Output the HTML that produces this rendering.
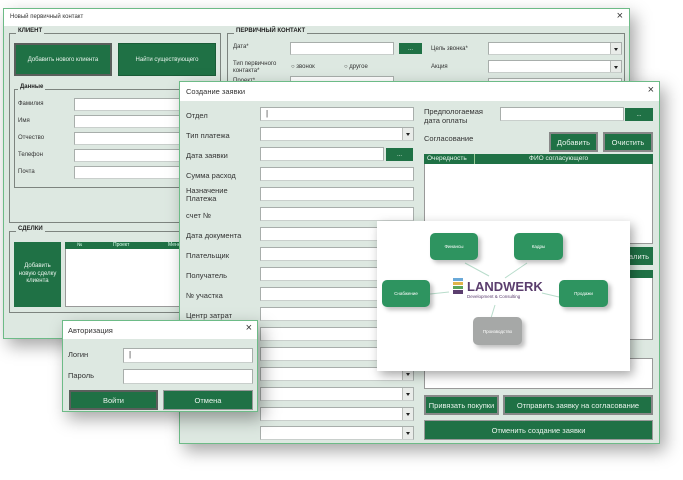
<!DOCTYPE html>
<html><head><meta charset="utf-8"><style>
*{box-sizing:border-box;margin:0;padding:0}
body{width:683px;height:480px;background:#fff;position:relative;overflow:hidden;font-family:"Liberation Sans","DejaVu Sans",sans-serif;color:#333}
.a{position:absolute}
.win{position:absolute;background:#dde8e1;border:1px solid #6dbb87;box-shadow:5px 7px 16px rgba(0,0,0,.35)}
.tb{position:absolute;left:0;top:0;right:0;background:#fff}
.in{position:absolute;background:#fff;border:1px solid #a8aeab;border-bottom-color:#c9cfcc}
.sel:after{content:"";position:absolute;right:0;top:0;bottom:0;width:10px;background:#e9ece9;border-left:1px solid #b9bdb9}
.sel:before{content:"";position:absolute;right:3px;top:50%;margin-top:-1px;border:2px solid transparent;border-top:3px solid #222;z-index:2}
.btn{position:absolute;background:#1f7145;color:#e8f3ec;text-align:center;display:flex;align-items:center;justify-content:center}
.dk{border:2px solid #5a5f5c}
.grp{position:absolute;border:1px solid #7d847f}
.gl{position:absolute;top:-6px;left:6px;background:#dde8e1;padding:0 2px;font-weight:bold;font-size:6px;color:#222}
.lb{position:absolute;font-size:6px;color:#333}
.l2{position:absolute;font-size:7.5px;color:#333}
.x{position:absolute;font-size:11px;color:#333}
.node{position:absolute;background:#2e9460;border-radius:5px;color:#fff;font-size:4.5px;display:flex;align-items:center;justify-content:center;box-shadow:3px 3px 4px rgba(0,0,0,.25)}
</style></head><body>

<div class="win" style="left:3px;top:8px;width:627px;height:331px">
 <div class="tb" style="height:17px"><span class="a" style="left:6px;top:5px;font-size:6px">Новый первичный контакт</span><span class="x" style="right:6px;top:1px">×</span></div>
 <div class="grp" style="left:5px;top:24px;width:212px;height:190px"><span class="gl">КЛИЕНТ</span></div>
 <div class="btn dk" style="left:10px;top:34px;width:98px;height:33px;font-size:6px">Добавить нового клиента</div>
 <div class="btn" style="left:114px;top:34px;width:98px;height:33px;font-size:6px;border:1px solid #1a5c38">Найти существующего</div>
 <div class="grp" style="left:10px;top:80px;width:200px;height:99px"><span class="gl" style="left:3px">Данные</span></div>
 <div class="lb" style="left:14px;top:92px">Фамилия</div><div class="in" style="left:70px;top:89px;width:120px;height:13px"></div>
 <div class="lb" style="left:14px;top:109px">Имя</div><div class="in" style="left:70px;top:106px;width:120px;height:13px"></div>
 <div class="lb" style="left:14px;top:126px">Отчество</div><div class="in" style="left:70px;top:123px;width:120px;height:13px"></div>
 <div class="lb" style="left:14px;top:143px">Телефон</div><div class="in" style="left:70px;top:140px;width:120px;height:13px"></div>
 <div class="lb" style="left:14px;top:160px">Почта</div><div class="in" style="left:70px;top:157px;width:120px;height:13px"></div>
 <div class="grp" style="left:5px;top:222px;width:180px;height:82px"><span class="gl">СДЕЛКИ</span></div>
 <div class="btn" style="left:10px;top:233px;width:47px;height:65px;font-size:6px;line-height:7.5px">Добавить<br>новую сделку<br>клиента</div>
 <div class="a" style="left:61px;top:233px;width:120px;height:65px;background:#fff;border:1px solid #999"></div>
 <div class="a" style="left:61px;top:233px;width:120px;height:7px;background:#1f7145;color:#dfe;font-size:5px;line-height:7px"><span class="a" style="left:12px">№</span><span class="a" style="left:48px">Проект</span><span class="a" style="left:103px">Менед</span></div>
 <div class="grp" style="left:223px;top:24px;width:398px;height:60px"><span class="gl">ПЕРВИЧНЫЙ КОНТАКТ</span></div>
 <div class="lb" style="left:229px;top:35px">Дата*</div><div class="in" style="left:286px;top:33px;width:104px;height:13px"></div>
 <div class="btn" style="left:395px;top:34px;width:23px;height:11px;font-size:6px">...</div>
 <div class="lb" style="left:229px;top:52px;line-height:7px">Тип первичного<br>контакта*</div>
 <div class="lb" style="left:287px;top:55px">○ звонок</div><div class="lb" style="left:340px;top:55px">○ другое</div>
 <div class="lb" style="left:229px;top:69px">Проект*</div><div class="in" style="left:286px;top:67px;width:104px;height:13px"></div>
 <div class="lb" style="left:427px;top:37px">Цель звонка*</div><div class="in sel" style="left:484px;top:33px;width:134px;height:13px"></div>
 <div class="lb" style="left:427px;top:55px">Акция</div><div class="in sel" style="left:484px;top:51px;width:134px;height:13px"></div>
 <div class="in" style="left:484px;top:69px;width:134px;height:13px"></div>
</div>

<div class="win" style="left:179px;top:81px;width:481px;height:363px">
 <div class="tb" style="height:19px"><span class="a" style="left:6px;top:5px;font-size:7.5px">Создание заявки</span><span class="x" style="right:5px;top:2px">×</span></div>
 <div class="l2" style="left:6px;top:29px">Отдел</div><div class="in" style="left:80px;top:25px;width:154px;height:14px"><span class="a" style="left:5px;top:1px;font-size:8px">|</span></div>
 <div class="l2" style="left:6px;top:49px">Тип платежа</div><div class="in sel" style="left:80px;top:45px;width:154px;height:14px"></div>
 <div class="l2" style="left:6px;top:69px">Дата заявки</div><div class="in" style="left:80px;top:65px;width:124px;height:14px"></div>
 <div class="btn" style="left:206px;top:66px;width:27px;height:13px;font-size:6px">...</div>
 <div class="l2" style="left:6px;top:89px">Сумма расход</div><div class="in" style="left:80px;top:85px;width:154px;height:14px"></div>
 <div class="l2" style="left:6px;top:105px;line-height:8px">Назначение<br>Платежа</div><div class="in" style="left:80px;top:105px;width:154px;height:14px"></div>
 <div class="l2" style="left:6px;top:129px">счет №</div><div class="in" style="left:80px;top:125px;width:154px;height:14px"></div>
 <div class="l2" style="left:6px;top:149px">Дата документа</div><div class="in" style="left:80px;top:145px;width:154px;height:14px"></div>
 <div class="l2" style="left:6px;top:169px">Плательщик</div><div class="in" style="left:80px;top:165px;width:154px;height:14px"></div>
 <div class="l2" style="left:6px;top:189px">Получатель</div><div class="in" style="left:80px;top:185px;width:154px;height:14px"></div>
 <div class="l2" style="left:6px;top:209px">№ участка</div><div class="in" style="left:80px;top:205px;width:154px;height:14px"></div>
 <div class="l2" style="left:6px;top:229px">Центр затрат</div><div class="in" style="left:80px;top:225px;width:154px;height:14px"></div>
 <div class="in" style="left:80px;top:245px;width:154px;height:14px"></div>
 <div class="in" style="left:80px;top:265px;width:154px;height:14px"></div>
 <div class="in sel" style="left:80px;top:285px;width:154px;height:14px"></div>
 <div class="in sel" style="left:80px;top:305px;width:154px;height:14px"></div>
 <div class="in sel" style="left:80px;top:325px;width:154px;height:14px"></div>
 <div class="in sel" style="left:80px;top:344px;width:154px;height:14px"></div>
 <div class="l2" style="left:244px;top:25px;line-height:9px">Предпологаемая<br>дата оплаты</div>
 <div class="in" style="left:320px;top:25px;width:124px;height:14px"></div>
 <div class="btn" style="left:445px;top:26px;width:28px;height:13px;font-size:6px">...</div>
 <div class="l2" style="left:244px;top:52px">Согласование</div>
 <div class="btn dk" style="left:369px;top:50px;width:49px;height:20px;font-size:7.5px;border-color:#888">Добавить</div>
 <div class="btn dk" style="left:423px;top:50px;width:50px;height:20px;font-size:7.5px;border-color:#888">Очистить</div>
 <div class="a" style="left:244px;top:72px;width:229px;height:90px;background:#fff;border:1px solid #999"></div>
 <div class="a" style="left:244px;top:72px;width:229px;height:10px;background:#1f7145;color:#e8f3ec;font-size:6.5px;line-height:10px"><span class="a" style="left:3px">Очередность</span><span class="a" style="left:50px;top:0;width:1px;height:10px;background:#9c9"></span><span class="a" style="left:105px">ФИО согласующего</span></div>
 <div class="btn" style="left:400px;top:165px;width:73px;height:18px;font-size:7.5px;justify-content:flex-end;padding-right:4px">Удалить</div>
 <div class="a" style="left:244px;top:188px;width:229px;height:70px;background:#fff;border:1px solid #999"></div>
 <div class="a" style="left:244px;top:188px;width:229px;height:8px;background:#1f7145"></div>
 <div class="a" style="left:244px;top:276px;width:229px;height:31px;background:#fff;border:1px solid #999"></div>
 <div class="btn dk" style="left:244px;top:313px;width:75px;height:20px;font-size:7.5px;border-color:#888">Привязать покупки</div>
 <div class="btn dk" style="left:323px;top:313px;width:150px;height:20px;font-size:7.5px;border-color:#888">Отправить заявку на согласование</div>
 <div class="btn" style="left:244px;top:338px;width:229px;height:20px;font-size:7.5px;border:1px solid #999">Отменить создание заявки</div>
</div>

<div class="a" style="left:377px;top:221px;width:253px;height:150px;background:#fff;box-shadow:3px 4px 10px rgba(0,0,0,.35)">
 <svg class="a" style="left:0;top:0" width="253" height="150"><g stroke="#b8dccb" stroke-width="1"><line x1="88" y1="42" x2="112" y2="55"/><line x1="150" y1="42" x2="128" y2="57"/><line x1="53" y1="73" x2="72" y2="71"/><line x1="165" y1="72" x2="182" y2="76"/><line x1="118" y1="84" x2="114" y2="97"/></g>
 <g><rect x="76" y="57" width="10" height="3" fill="#6aa9d8"/><rect x="76" y="61" width="10" height="3" fill="#e0b44a"/><rect x="76" y="65" width="10" height="3" fill="#5aa55a"/><rect x="76" y="69" width="10" height="4" fill="#5b3e6e"/></g>
 <text x="90" y="70" font-family="Liberation Sans" font-weight="bold" font-size="13" fill="#5b3e6e">LANDWERK</text>
 <text x="90" y="77" font-family="Liberation Sans" font-size="4.5" fill="#5b3e6e">Development &amp; Consulting</text></svg>
 <div class="node" style="left:53px;top:12px;width:48px;height:27px">Финансы</div>
 <div class="node" style="left:137px;top:12px;width:49px;height:27px">Кадры</div>
 <div class="node" style="left:5px;top:59px;width:48px;height:27px">Снабжение</div>
 <div class="node" style="left:182px;top:59px;width:49px;height:27px">Продажи</div>
 <div class="node" style="left:96px;top:96px;width:49px;height:28px;background:#a6a8a7">Производство</div>
</div>

<div class="win" style="left:62px;top:320px;width:196px;height:92px">
 <div class="tb" style="height:18px"><span class="a" style="left:5px;top:5px;font-size:7.5px">Авторизация</span><span class="x" style="right:5px;top:1px">×</span></div>
 <div class="l2" style="left:5px;top:29px">Логин</div><div class="in" style="left:60px;top:27px;width:130px;height:15px"><span class="a" style="left:5px;top:1px;font-size:8px">|</span></div>
 <div class="l2" style="left:5px;top:50px">Пароль</div><div class="in" style="left:60px;top:48px;width:130px;height:15px"></div>
 <div class="btn dk" style="left:6px;top:69px;width:89px;height:20px;font-size:7.5px">Войти</div>
 <div class="btn" style="left:100px;top:69px;width:90px;height:20px;font-size:7.5px;border:1px solid #999">Отмена</div>
</div>
</body></html>
